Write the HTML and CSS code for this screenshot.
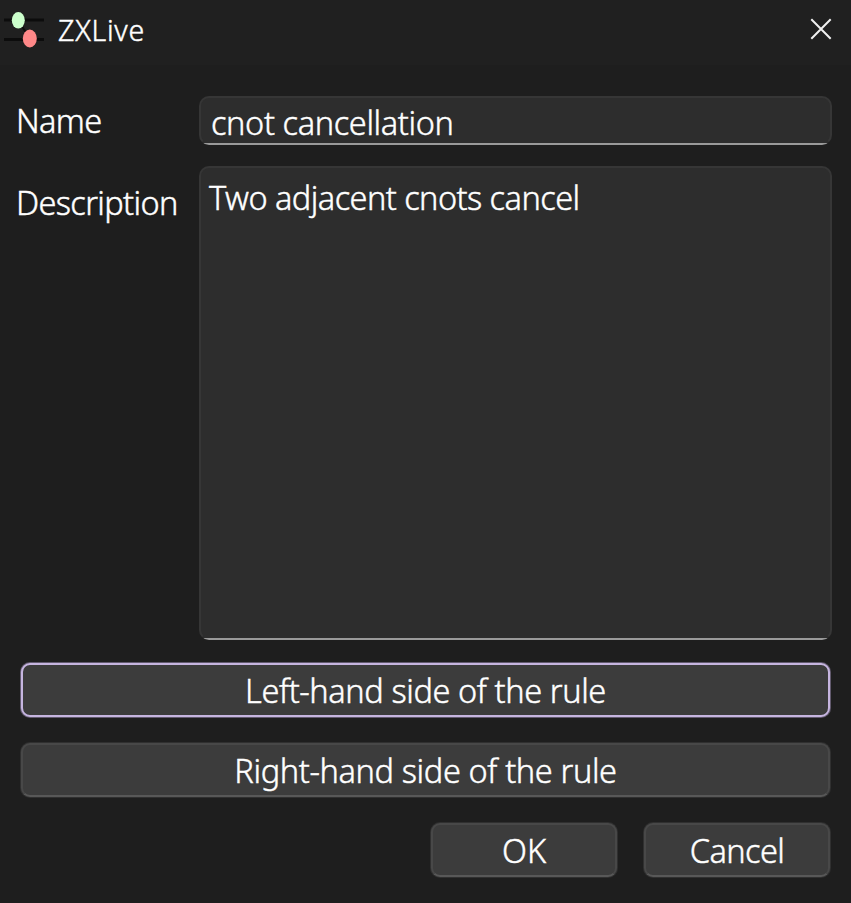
FILE: index.html
```html
<!DOCTYPE html>
<html lang="en">
<head>
<meta charset="utf-8">
<title>ZXLive</title>
<link rel="stylesheet" href="styles.css">
</head>
<body>
<div class="dialog">
  <header class="titlebar">
    <svg class="logo" width="42" height="42" viewBox="0 0 42 42">
      <path d="M1 13H41M1 32.500H41" stroke="#0c0c0c" stroke-width="3"/>
      <path d="M15 13L27 32" stroke="#0c0c0c" stroke-width="2"/>
      <ellipse cx="15.300" cy="13.300" rx="6.500" ry="8.300" fill="#ccffcc"/>
      <ellipse cx="26.800" cy="31.500" rx="7" ry="9" fill="#ff8888"/>
    </svg>
    <h1 class="title"><span class="t-title">ZXLive</span></h1>
    <svg class="close" width="22" height="22" viewBox="0 0 22 22">
      <path d="M1.300 1.300L20.700 20.700M20.700 1.300L1.300 20.700" stroke="#f0f0f0" stroke-width="2"/>
    </svg>
  </header>
  <main class="form">
    <div class="row">
      <label class="label"><span class="t-name">Name</span></label>
      <div class="field field-line"><span class="t-value">cnot cancellation</span></div>
    </div>
    <div class="row row-description">
      <label class="label label-description"><span class="t-desc">Description</span></label>
      <div class="field field-area"><span class="t-area">Two adjacent cnots cancel</span></div>
    </div>
    <button class="button focused"><span class="t-left">Left-hand side of the rule</span></button>
    <button class="button"><span class="t-right">Right-hand side of the rule</span></button>
    <div class="actions">
      <button class="button"><span class="t-ok">OK</span></button>
      <button class="button"><span class="t-cancel">Cancel</span></button>
    </div>
  </main>
</div>
</body>
</html>
```
FILE: styles.css
```css
* { box-sizing: border-box; }
body {
  margin: 0;
  background: #1e1e1e;
  color: #fff;
  font: 300 32.500px/44px "Noto Sans", "Open Sans", sans-serif;
  -webkit-text-stroke: 0.450px #fff;
}
.dialog { height: 903px; overflow: hidden; }
.titlebar {
  display: flex;
  align-items: center;
  height: 65px;
  padding: 0 19px 5px 3px;
  background: #202020;
}
.logo { margin-top: -4px; }
.close { margin-top: -2px; }
.title {
  flex: 1;
  margin: 0 0 0 13px;
  font-size: 28.500px;
  font-weight: 300;
}
.form {
  display: flex;
  flex-direction: column;
  padding: 31px 21px 0;
}
.row {
  display: flex;
  height: 49px;
  margin: 0 -2px 21px -5px;
}
.row-description { height: 474px; margin-bottom: 23px; }
.label { width: 183px; padding-top: 3px; white-space: nowrap; }
.label-description { padding-top: 15px; }
.field {
  flex: 1;
  border: 2px solid #363636;
  border-bottom-color: transparent;
  border-radius: 10px;
  background: linear-gradient(#9a9a9a, #9a9a9a) bottom / 100% 2px no-repeat border-box, #2d2d2d;
}
.field-line { padding: 3px 10px; }
.field-area { padding: 8px 8px; }
.button {
  height: 54px;
  margin: 0 0 26px;
  padding: 2px 0 0;
  border: 2px solid #484848;
  border-bottom-color: #585858;
  border-radius: 9px;
  box-shadow: 0 0 0 1px #303030;
  background: #3c3c3c;
  color: inherit;
  font: inherit;
  -webkit-text-stroke: inherit;
}
.focused { border-color: #c6b5e0; box-shadow: 0 0 0 1px #625a6e; }
.actions { display: flex; justify-content: flex-end; gap: 27px; }
.actions .button { width: 186px; }

/* Tracking tuned per string */
.t-title { letter-spacing: 0.750px; }
.t-name { letter-spacing: -0.650px; }
.t-value { letter-spacing: -0.380px; }
.t-desc { letter-spacing: -0.650px; }
.t-area { letter-spacing: -0.550px; }
.t-left { letter-spacing: -0.400px; }
.t-right { letter-spacing: -0.370px; }
.t-cancel { letter-spacing: -0.600px; }
```
